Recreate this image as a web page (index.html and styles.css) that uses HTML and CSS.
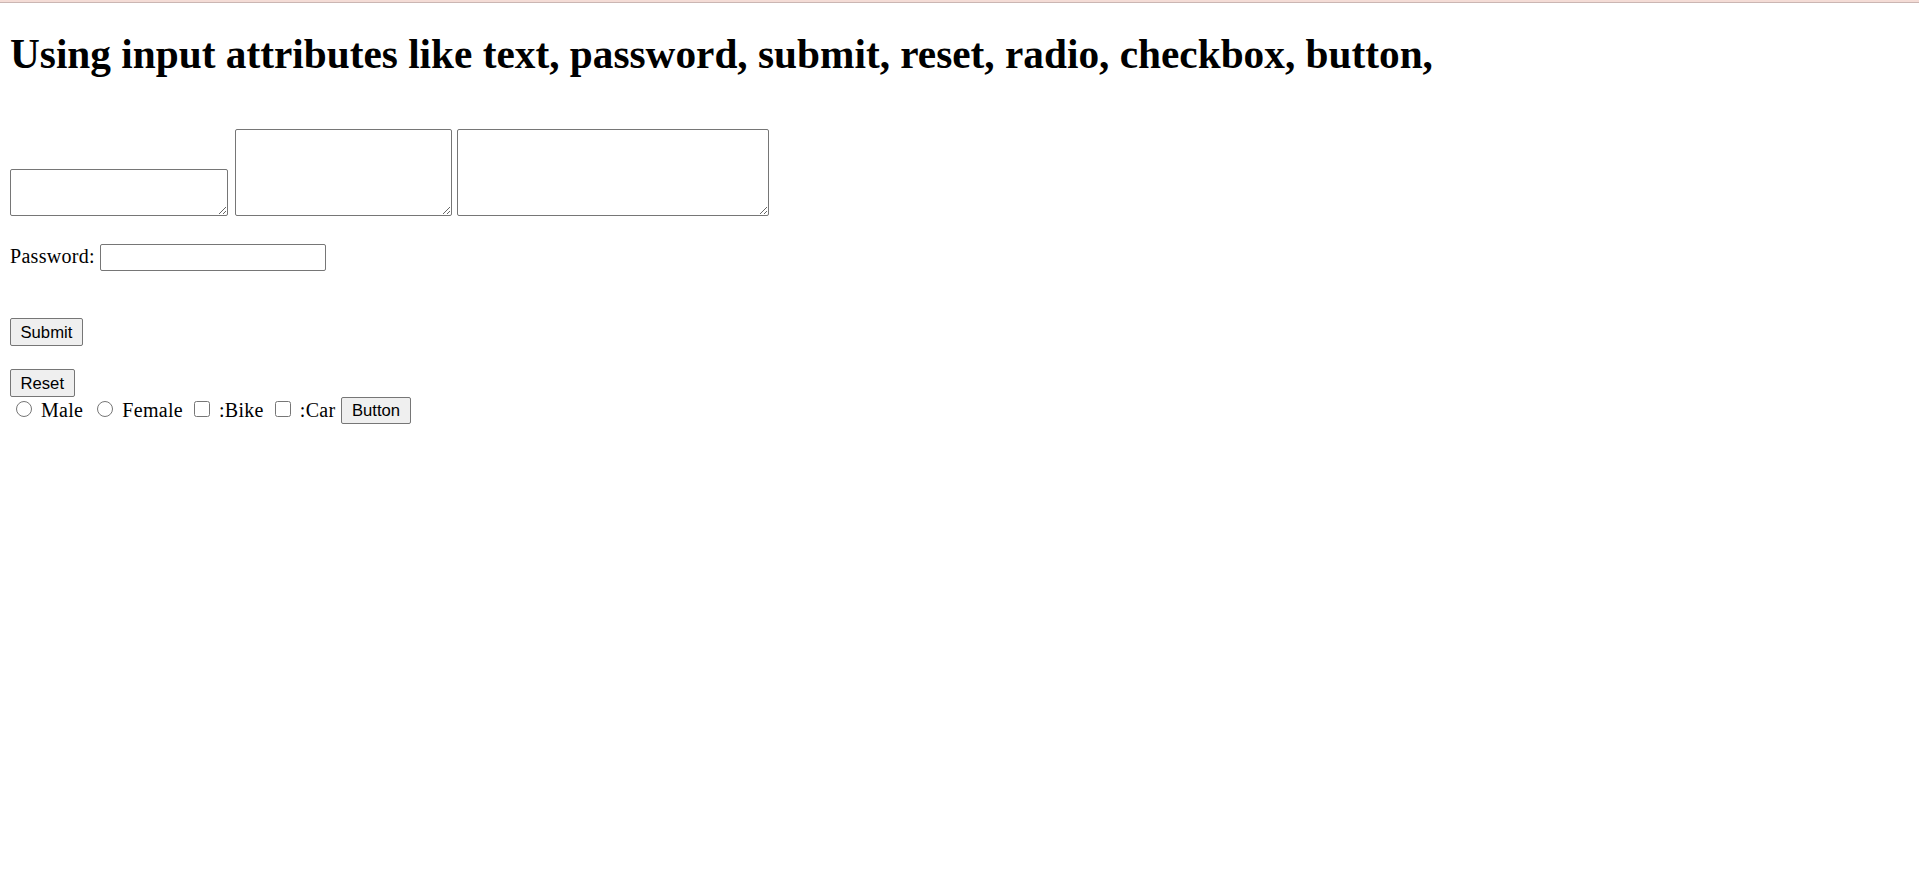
FILE: index.html
```html
<!DOCTYPE html>
<html lang="en">
<head>
<meta charset="utf-8">
<title>Input attributes</title>
<link rel="stylesheet" href="styles.css">
</head>
<body>
<div class="topbar"></div>
<main class="page">
  <h1 class="title">Using input attributes like text, password, submit, reset, radio, checkbox, button,</h1>
  <form class="form">
    <div class="areas">
      <textarea class="area area-sm"></textarea>
      <textarea class="area area-md"></textarea>
      <textarea class="area area-lg"></textarea>
    </div>
    <div class="pw-row">
      <label class="pw-label" for="pw">Password:</label>
      <input id="pw" type="password" class="pw">
    </div>
    <div class="btn-row btn-row-submit">
      <input type="submit" class="btn btn-tall" value="Submit">
    </div>
    <div class="btn-row btn-row-reset">
      <input type="reset" class="btn btn-tall" value="Reset">
    </div>
    <div class="choices">
      <input type="radio" name="gender" class="radio"><span class="opt">Male</span>
      <input type="radio" name="gender" class="radio"><span class="opt">Female</span>
      <input type="checkbox" class="check"><span class="opt">:Bike</span>
      <input type="checkbox" class="check"><span class="opt opt-last">:Car</span>
      <input type="button" class="btn" value="Button">
    </div>
  </form>
</main>
</body>
</html>
```
FILE: styles.css
```css
html, body {
  background: #ffffff;
}

body {
  margin: 0;
  font-family: "Liberation Serif", "Times New Roman", serif;
  font-size: 20px;
  line-height: 23px;
  letter-spacing: 0.3px;
  color: #000000;
}

.topbar {
  height: 2px;
  background: #f4dcd6;
  border-bottom: 1px solid #cbb6b3;
}

.page {
  padding: 0 10px;
}

.title {
  margin: 28px 0 52px;
  font-size: 41.3px;
  line-height: 46px;
  font-weight: bold;
  letter-spacing: 0;
}

.form {
  margin: 0;
}

.areas {
  display: flex;
  align-items: flex-end;
}

.area {
  box-sizing: border-box;
  margin: 0;
  padding: 2px;
  border: 1px solid #767676;
  border-radius: 2px;
  background: #ffffff;
  font-family: "Liberation Mono", monospace;
  font-size: 16px;
}

.area-sm {
  width: 218px;
  height: 47px;
  margin-right: 7px;
}

.area-md {
  width: 217px;
  height: 87px;
  margin-right: 5px;
}

.area-lg {
  width: 312px;
  height: 87px;
}

.pw-row {
  display: flex;
  align-items: baseline;
  margin-top: 28px;
}

.pw-label {
  margin-right: 5px;
}

.pw {
  box-sizing: border-box;
  width: 226px;
  height: 27px;
  margin: 0;
  padding: 1px 2px;
  border: 1px solid #767676;
  border-radius: 2px;
  background: #ffffff;
  font-family: "Liberation Sans", Arial, sans-serif;
  font-size: 16.67px;
  letter-spacing: 0;
}

.btn-row {
  display: flex;
}

.btn-row-submit {
  margin-top: 47px;
}

.btn-row-reset {
  margin-top: 23px;
}

.btn {
  box-sizing: border-box;
  height: 27px;
  margin: 0;
  padding: 0 9.5px;
  border: 1px solid #767676;
  border-radius: 2px;
  background: #efefef;
  color: #000000;
  font-family: "Liberation Sans", Arial, sans-serif;
  font-size: 16.67px;
  line-height: 19px;
  letter-spacing: 0;
}

.btn-tall {
  height: 28px;
}

.choices {
  display: flex;
  align-items: center;
  margin-top: 0;
}

.radio {
  width: 16px;
  height: 16px;
  margin: 0 4px 4px 6px;
}

.check {
  width: 16px;
  height: 16px;
  margin: 0 4px 4px 3px;
}

.opt {
  margin: 0 8px 0 5px;
}

.opt-last {
  margin-right: 6px;
}
```
